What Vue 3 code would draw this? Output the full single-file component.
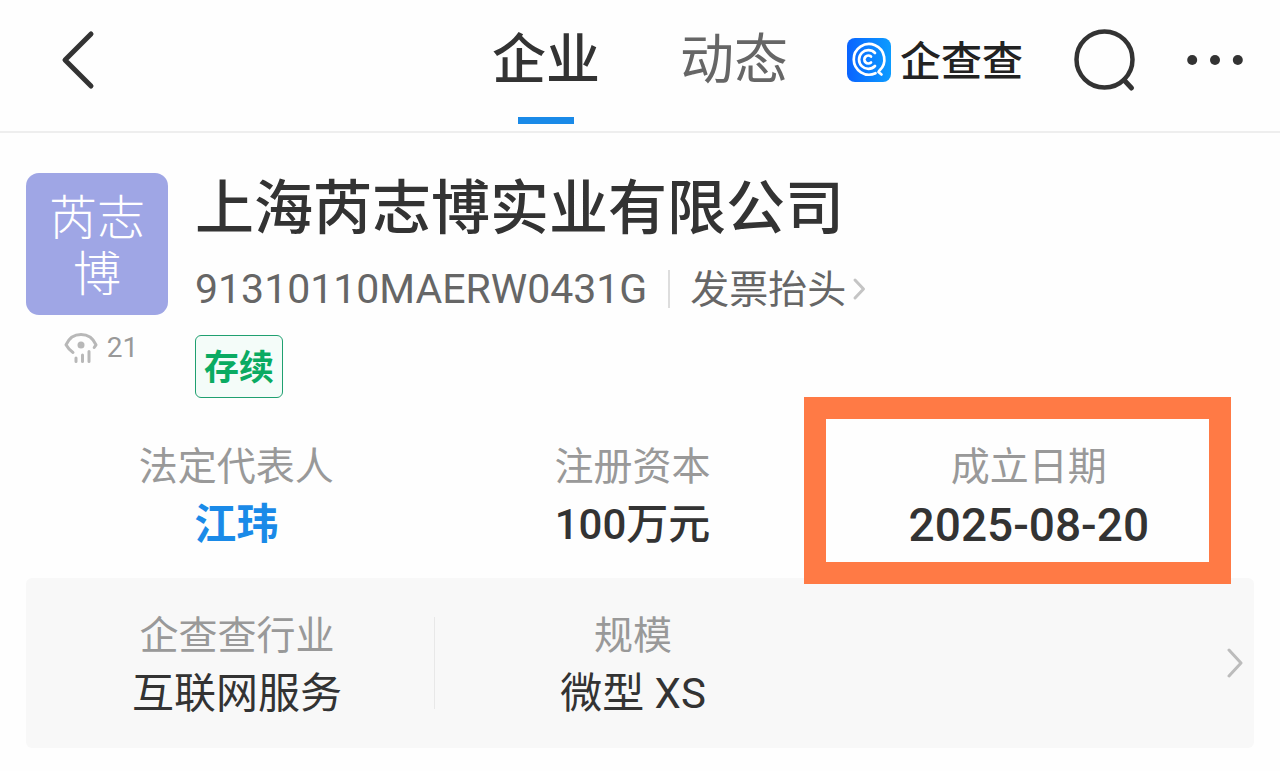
<script setup>
const facts = [
  { label: '法定代表人', value: '江玮', link: true },
  { label: '注册资本', value: '100万元' },
  { label: '成立日期', value: '2025-08-20', marked: true },
]
const industry = [
  { label: '企查查行业', value: '互联网服务', divider: true },
  { label: '规模', value: '微型 XS' },
]
</script>

<template>
  <div class="page">
    <header class="bar">
      <button class="icon-btn back" type="button" aria-label="返回">
        <svg width="34" height="60" viewBox="0 0 34 60" fill="none" stroke="#333" stroke-width="5" stroke-linecap="round" stroke-linejoin="round">
          <path d="M30 4 4 30 30 56" />
        </svg>
      </button>
      <nav class="tabs">
        <a href="#company" class="tab active">企业</a>
        <a href="#news" class="tab">动态</a>
      </nav>
      <a href="#home" class="brand">
        <svg width="44" height="44" viewBox="0 0 44 44" fill="none" stroke="#fff" stroke-width="2.700" stroke-linecap="round" stroke-linejoin="round">
          <defs>
            <linearGradient id="brandFill" x1="0" y1="0" x2="1" y2="0">
              <stop offset="0" stop-color="#0a63ff" />
              <stop offset="1" stop-color="#0c9cff" />
            </linearGradient>
          </defs>
          <rect width="44" height="44" rx="8" fill="url(#brandFill)" stroke="none" />
          <path d="M28.500 35.200A15.300 15.300 0 1 1 32.500 32.500L31.500 34 34.500 36.500" />
          <path d="M28 15A9.300 9.300 0 1 0 28 28" />
          <path d="M24 18.500A4 4 0 1 0 24 24.500" />
        </svg>
        <span>企查查</span>
      </a>
      <button class="icon-btn" type="button" aria-label="搜索">
        <svg width="62" height="64" viewBox="0 0 62 64" fill="none" stroke="#333" stroke-width="4.500" stroke-linecap="round">
          <circle cx="30.500" cy="31.500" r="28" />
          <path d="M50 52 57.500 60" stroke-width="5" />
        </svg>
      </button>
      <button class="icon-btn" type="button" aria-label="更多">
        <svg width="56" height="12" viewBox="0 0 56 12" fill="#333">
          <circle cx="5.200" cy="6" r="5" />
          <circle cx="28" cy="6" r="5" />
          <circle cx="50.800" cy="6" r="5" />
        </svg>
      </button>
    </header>

    <main class="content">
      <section class="company">
        <div class="side">
          <div class="avatar">芮志博</div>
          <div class="views">
            <svg width="34" height="32" viewBox="0 0 34 32" fill="none" stroke="#b8b8b8" stroke-width="3" stroke-linecap="round" stroke-linejoin="round">
              <path d="M9 20.500C6 18.500 3.500 15.500 2 12.800 5 6 10.500 2.500 17 2.500S29 6 32 12.800L30.200 15.500" />
              <circle cx="17" cy="13" r="3.500" fill="#b8b8b8" stroke="none" />
              <path d="M12 26v3.500M18.500 23v6.500M25 19.500v10" />
            </svg>
            <span>21</span>
          </div>
        </div>
        <div class="info">
          <h1 class="name">上海芮志博实业有限公司</h1>
          <div class="code-row">
            <span class="code">91310110MAERW0431G</span>
            <a href="#invoice" class="invoice">
              <span>发票抬头</span>
              <svg width="14" height="24" viewBox="0 0 14 24" fill="none" stroke="#c4c4c4" stroke-width="3" stroke-linecap="round" stroke-linejoin="round">
                <path d="M3 3 11.500 12 3 21" />
              </svg>
            </a>
          </div>
          <span class="status">存续</span>
        </div>
      </section>

      <dl class="grid facts">
        <div v-for="f in facts" :key="f.label" class="cell" :class="{ marked: f.marked }">
          <dt>{{ f.label }}</dt>
          <dd><a v-if="f.link" href="#person">{{ f.value }}</a><template v-else>{{ f.value }}</template></dd>
        </div>
      </dl>

      <section class="card">
        <dl class="grid">
          <div v-for="f in industry" :key="f.label" class="cell" :class="{ divider: f.divider }">
            <dt>{{ f.label }}</dt>
            <dd>{{ f.value }}</dd>
          </div>
        </dl>
        <button class="icon-btn" type="button" aria-label="查看更多">
          <svg width="16" height="30" viewBox="0 0 16 30" fill="none" stroke="#bcbcbc" stroke-width="3" stroke-linecap="round" stroke-linejoin="round">
            <path d="M2 2 14 15 2 28" />
          </svg>
        </button>
      </section>
    </main>
  </div>
</template>

<style>
body {
  background: #fefefe;
}
</style>

<style scoped>
.page {
  font-family: "Noto Sans CJK SC", sans-serif;
  color: #333;
}
a {
  color: inherit;
  text-decoration: none;
}
.icon-btn {
  display: flex;
  padding: 0;
  border: 0;
  background: none;
}
svg {
  display: block;
  flex: none;
}
.bar {
  display: flex;
  align-items: center;
  gap: 51px;
  height: 120px;
  padding: 0 37px 11px 61px;
  border-bottom: 2px solid #eee;
}
.back {
  margin-right: auto;
}
.tabs {
  display: flex;
  align-self: stretch;
  gap: 80px;
  margin-right: 8px;
}
.tab {
  position: relative;
  font-size: 54px;
  line-height: 112px;
  color: #666;
}
.tab.active {
  color: #333;
  font-weight: 500;
}
.tab.active::after {
  content: "";
  position: absolute;
  left: 50%;
  top: 117px;
  width: 56px;
  height: 7px;
  margin-left: -28px;
  background: #1a8ae8;
}
.brand {
  display: flex;
  align-items: center;
  gap: 9px;
  font-size: 41px;
  line-height: 40px;
  font-weight: 500;
  color: #222;
}
.brand span {
  padding-bottom: 4px;
}
.content {
  padding: 38px 26px 0;
}
.company {
  display: flex;
  gap: 27px;
}
.side {
  width: 142px;
  padding-top: 2px;
}
.avatar {
  box-sizing: border-box;
  height: 142px;
  padding: 13px 20px;
  border-radius: 13px;
  background: #9fa6e5;
  color: #fff;
  font-size: 48px;
  font-weight: 300;
  line-height: 56px;
  text-align: center;
}
.views,
.code,
dd {
  font-family: Roboto, "Noto Sans CJK SC", sans-serif;
}
.views {
  display: flex;
  align-items: center;
  justify-content: center;
  gap: 9px;
  margin-top: 13px;
  padding-left: 8px;
  font-size: 28px;
  line-height: 40px;
  color: #999;
}
.name {
  margin: 0;
  font-size: 59px;
  line-height: 66px;
  font-weight: 500;
}
.code-row {
  display: flex;
  align-items: center;
  margin: 27px 0 21px;
  color: #666;
}
.code {
  font-size: 41px;
  line-height: 50px;
}
.invoice {
  display: flex;
  align-items: center;
  gap: 6px;
  margin-left: 21px;
  font-size: 39px;
  line-height: 32px;
  padding-left: 20px;
  border-left: 2px solid #ddd;
}
.invoice span {
  padding-bottom: 6px;
}
.status {
  display: inline-block;
  padding: 0 8px 4px;
  border: 1px solid #1fa070;
  border-radius: 6px;
  background: #f4fcf9;
  color: #0aab62;
  font-size: 35px;
  line-height: 57px;
  font-weight: 700;
}
.grid {
  display: grid;
  grid-template-columns: repeat(3, 1fr);
  flex: 1;
  margin: 0;
  text-align: center;
}
.facts {
  padding: 38px 27px 0 12px;
}
.cell {
  position: relative;
}
dt {
  font-size: 39px;
  line-height: 54px;
  color: #999;
}
dd {
  margin: 0;
  font-size: 42px;
  line-height: 70px;
}
.facts dd {
  font-weight: 500;
}
.facts dd a {
  color: #1a8ae8;
  font-weight: 700;
}
.facts .marked dd {
  font-size: 46px;
}
.marked::after {
  content: "";
  position: absolute;
  z-index: 1;
  inset: -39px -4px -24px -27px;
  border: 22px solid #ff7a45;
}
.card {
  display: flex;
  align-items: center;
  margin-top: 18px;
  padding: 0 11px 0 13px;
  border-radius: 6px;
  background: #f8f8f8;
}
.card .grid {
  padding: 27px 0 19px;
}
.divider::after {
  content: "";
  position: absolute;
  right: 0;
  top: 12px;
  bottom: 20px;
  width: 1px;
  background: #e8e8e8;
}
</style>
